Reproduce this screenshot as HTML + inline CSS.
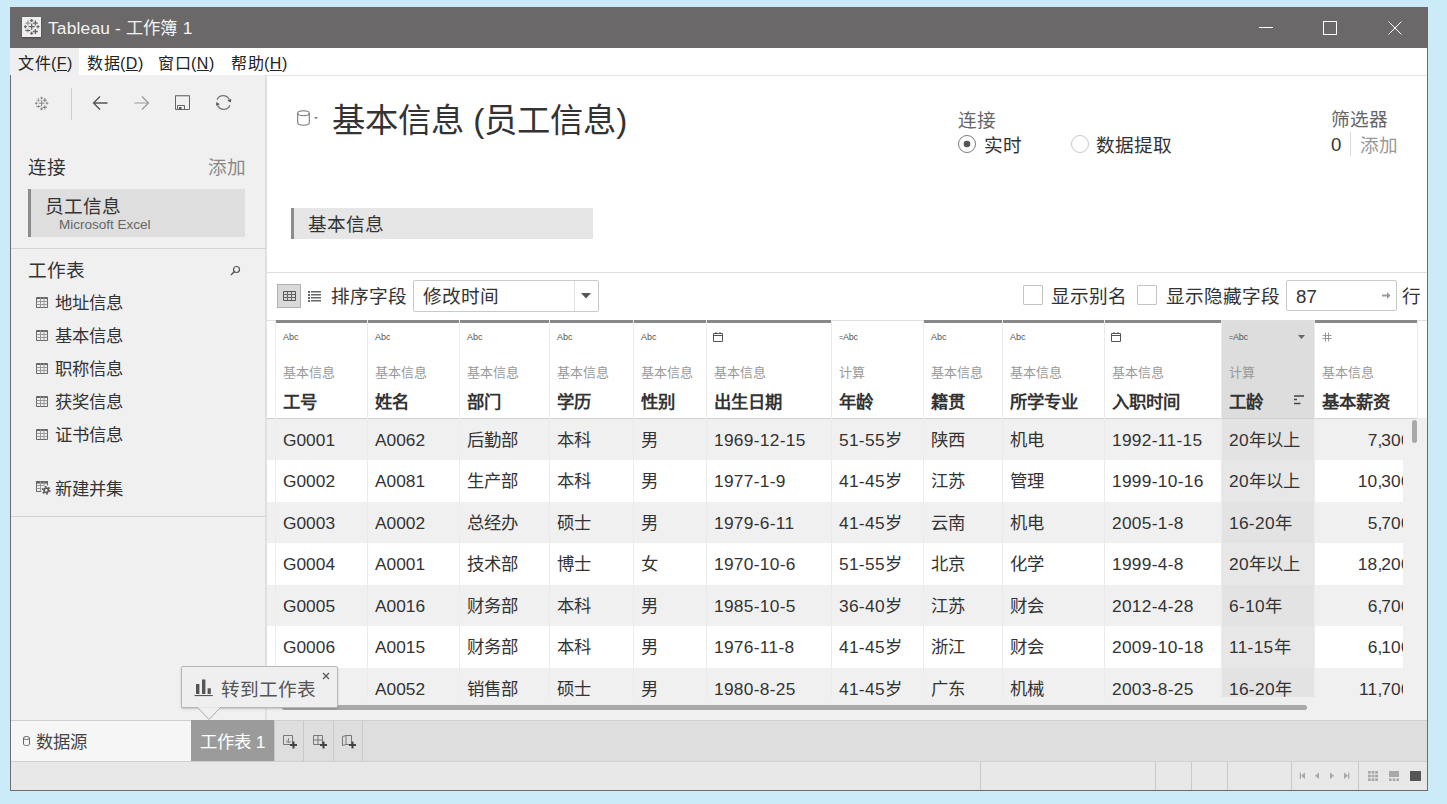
<!DOCTYPE html>
<html lang="zh-CN">
<head>
<meta charset="utf-8">
<style>
*{margin:0;padding:0;box-sizing:border-box}
html,body{width:1447px;height:804px;overflow:hidden;background:#cbebf8;font-family:"Liberation Sans",sans-serif;color:#333}
div,span{position:absolute}
.t{white-space:nowrap;line-height:1}
u{text-decoration:underline;text-underline-offset:1px}
</style>
</head>
<body>

<div style="left:10px;top:7px;width:1418px;height:784px;background:#fff;border:1px solid #6c6c6c;border-top:none"></div>
<div style="left:10px;top:7px;width:1418px;height:41px;background:#6a6868"></div>
<div style="left:22px;top:17px;width:19px;height:19.5px;background:#eeeeee;box-shadow:0 1px 2px rgba(0,0,0,.35)">
<svg width="19" height="20" viewBox="0 0 19 20" style="position:absolute;left:0;top:0">
<g stroke="#666" stroke-width="1.3" fill="none">
<path d="M9.7 6.6v6.2M6.6 9.7h6.2"/>
<path d="M9.6 2v3M8.1 3.5h3"/>
<path d="M9.6 14.8v3M8.1 16.3h3"/>
<path d="M3.4 8.2v3M1.9 9.7h3"/>
<path d="M16 8.2v3M14.5 9.7h3"/>
<path d="M13.4 3.6v5M10.9 6.1h5"/>
<path d="M13.4 12v5M10.9 14.5h5"/>
<path d="M5.9 3.6v5M3.4 6.1h5" stroke="#999"/>
<path d="M5.9 11.5v4" stroke="#aaa"/><path d="M3.4 13.5h5"/>
</g></svg></div>
<div class="t" style="left:48px;top:19.5px;font-size:17.33px;color:#f4f4f4;letter-spacing:0.2px">Tableau - 工作簿 1</div>
<div style="left:1259px;top:27px;width:14px;height:1px;background:#fff"></div>
<div style="left:1323px;top:21px;width:14px;height:14px;border:1px solid #fff"></div>
<svg style="position:absolute;left:1388px;top:21px" width="14" height="14"><path d="M0.5 0.5L13.5 13.5M13.5 0.5L0.5 13.5" stroke="#fff" stroke-width="1"/></svg>
<div style="left:10px;top:48px;width:69px;height:27px;background:#efefef"></div>
<div style="left:267px;top:75px;width:1160px;height:1px;background:#e6e6e6"></div>
<div class="t" style="left:18px;top:55.5px;font-size:16px;color:#222;letter-spacing:0.5px">文件(<u>F</u>)</div>
<div class="t" style="left:87px;top:55.5px;font-size:16px;color:#222;letter-spacing:0.5px">数据(<u>D</u>)</div>
<div class="t" style="left:158px;top:55.5px;font-size:16px;color:#222;letter-spacing:0.5px">窗口(<u>N</u>)</div>
<div class="t" style="left:231px;top:55.5px;font-size:16px;color:#222;letter-spacing:0.5px">帮助(<u>H</u>)</div>
<div style="left:11px;top:75px;width:256px;height:645px;background:#f0f0f0;border-right:2px solid #e0e0e0"></div>
<svg style="position:absolute;left:33px;top:95px" width="17" height="17" viewBox="0 0 19 20">
<g stroke="#888" stroke-width="1.3" fill="none">
<path d="M9.7 6.6v6.2M6.6 9.7h6.2"/>
<path d="M9.6 2v3M8.1 3.5h3"/>
<path d="M9.6 14.8v3M8.1 16.3h3"/>
<path d="M3.4 8.2v3M1.9 9.7h3"/>
<path d="M16 8.2v3M14.5 9.7h3"/>
<path d="M13.4 3.6v5M10.9 6.1h5"/>
<path d="M13.4 12v5M10.9 14.5h5"/>
<path d="M5.9 3.6v5M3.4 6.1h5" stroke="#aaa"/>
<path d="M5.9 11.5v4" stroke="#bbb"/><path d="M3.4 13.5h5"/>
</g></svg>
<div style="left:71px;top:88px;width:1px;height:32px;background:#cfcfcf"></div>
<svg style="position:absolute;left:92px;top:95px" width="17" height="16"><path d="M1.5 8H15.5M8 1.5L1.5 8L8 14.5" stroke="#555" stroke-width="1.4" fill="none"/></svg>
<svg style="position:absolute;left:133px;top:95px" width="17" height="16"><path d="M1.5 8H15.5M9 1.5L15.5 8L9 14.5" stroke="#999" stroke-width="1.2" fill="none"/></svg>
<svg style="position:absolute;left:175px;top:95px" width="15" height="15"><path d="M0.5 0.5H14.5V14.5H0.5Z" stroke="#666" stroke-width="1" fill="none"/><path d="M0.5 1H14.5" stroke="#999" stroke-width="1"/><path d="M2.5 10.5H9.5V14.5H2.5Z" stroke="#666" stroke-width="1" fill="none"/><rect x="4" y="12" width="2.5" height="2.5" fill="#555"/></svg>
<svg style="position:absolute;left:215px;top:95px" width="17" height="16" viewBox="0 0 17 16"><path d="M2 4.6A6.8 6.8 0 0 1 14.3 4.6M15 10.2A6.8 6.8 0 0 1 2.6 10.4" stroke="#777" stroke-width="1.3" fill="none"/><path d="M12.3 5.4L16.4 3.9L15.7 7.6Z M1 10.7L1.4 7L4.9 9.3Z" fill="#555"/></svg>
<div class="t" style="left:28px;top:158.5px;font-size:18.67px;color:#333">连接</div>
<div class="t" style="left:208px;top:158.5px;font-size:18.67px;color:#8a8a8a">添加</div>
<div style="left:28px;top:189px;width:217px;height:48px;background:#dedede;border-left:3px solid #8c8c8c"></div>
<div class="t" style="left:45px;top:197.5px;font-size:18.67px;color:#333">员工信息</div>
<div class="t" style="left:59px;top:218px;font-size:13.5px;color:#666">Microsoft Excel</div>
<div style="left:11px;top:248px;width:255px;height:1px;background:#d4d4d4"></div>
<div class="t" style="left:28px;top:262px;font-size:18.67px;color:#333">工作表</div>
<svg style="position:absolute;left:230px;top:265px" width="11" height="11"><circle cx="6.5" cy="4.5" r="3" stroke="#555" stroke-width="1.2" fill="none"/><path d="M4.4 6.6L1 10" stroke="#555" stroke-width="1.4"/></svg>
<svg style="position:absolute;left:36px;top:297px" width="12" height="11"><path d="M0.5 0.5H11.5V10.5H0.5Z" stroke="#666" fill="none"/><path d="M0.5 1.5H11.5" stroke="#666"/><path d="M0.5 4.5H11.5M0.5 7.5H11.5M4.5 0.5V10.5M8 0.5V10.5" stroke="#999" stroke-width="1" fill="none"/></svg>
<div class="t" style="left:55px;top:294.5px;font-size:17.33px;color:#333">地址信息</div>
<svg style="position:absolute;left:36px;top:330px" width="12" height="11"><path d="M0.5 0.5H11.5V10.5H0.5Z" stroke="#666" fill="none"/><path d="M0.5 1.5H11.5" stroke="#666"/><path d="M0.5 4.5H11.5M0.5 7.5H11.5M4.5 0.5V10.5M8 0.5V10.5" stroke="#999" stroke-width="1" fill="none"/></svg>
<div class="t" style="left:55px;top:327.5px;font-size:17.33px;color:#333">基本信息</div>
<svg style="position:absolute;left:36px;top:363px" width="12" height="11"><path d="M0.5 0.5H11.5V10.5H0.5Z" stroke="#666" fill="none"/><path d="M0.5 1.5H11.5" stroke="#666"/><path d="M0.5 4.5H11.5M0.5 7.5H11.5M4.5 0.5V10.5M8 0.5V10.5" stroke="#999" stroke-width="1" fill="none"/></svg>
<div class="t" style="left:55px;top:360.5px;font-size:17.33px;color:#333">职称信息</div>
<svg style="position:absolute;left:36px;top:396px" width="12" height="11"><path d="M0.5 0.5H11.5V10.5H0.5Z" stroke="#666" fill="none"/><path d="M0.5 1.5H11.5" stroke="#666"/><path d="M0.5 4.5H11.5M0.5 7.5H11.5M4.5 0.5V10.5M8 0.5V10.5" stroke="#999" stroke-width="1" fill="none"/></svg>
<div class="t" style="left:55px;top:393.5px;font-size:17.33px;color:#333">获奖信息</div>
<svg style="position:absolute;left:36px;top:429px" width="12" height="11"><path d="M0.5 0.5H11.5V10.5H0.5Z" stroke="#666" fill="none"/><path d="M0.5 1.5H11.5" stroke="#666"/><path d="M0.5 4.5H11.5M0.5 7.5H11.5M4.5 0.5V10.5M8 0.5V10.5" stroke="#999" stroke-width="1" fill="none"/></svg>
<div class="t" style="left:55px;top:426.5px;font-size:17.33px;color:#333">证书信息</div>
<svg style="position:absolute;left:36px;top:481px" width="16" height="15"><path d="M0.5 0.5H11.5V10.5H0.5Z" stroke="#666" fill="none"/><rect x="0" y="0" width="12" height="2.6" fill="#666"/><path d="M0.5 4.5H11.5M0.5 7.5H11.5M4.5 0.5V10.5M8 0.5V10.5" stroke="#999" fill="none"/><circle cx="10.2" cy="9.3" r="5" fill="#f0f0f0"/><circle cx="10.2" cy="9.3" r="2.2" stroke="#5a5a5a" stroke-width="1.7" fill="none"/><circle cx="10.2" cy="9.3" r="3.6" stroke="#5a5a5a" stroke-width="1.6" fill="none" stroke-dasharray="1.7 2.07"/></svg>
<div class="t" style="left:55px;top:480.5px;font-size:17.33px;color:#333">新建并集</div>
<div style="left:11px;top:516px;width:255px;height:1px;background:#d4d4d4"></div>
<svg style="position:absolute;left:297px;top:110px" width="22" height="16"><path d="M0.7 3.2V12.8C0.7 14.3 3 15.3 6.5 15.3S12.3 14.3 12.3 12.8V3.2" stroke="#777" stroke-width="1.1" fill="none"/><ellipse cx="6.5" cy="3.2" rx="5.8" ry="2.5" stroke="#777" stroke-width="1.1" fill="none"/><path d="M17 7H21L19 9.5Z" fill="#888"/></svg>
<div class="t" style="left:332px;top:103.5px;font-size:33.33px;color:#333">基本信息 (员工信息)</div>
<div class="t" style="left:958px;top:112px;font-size:18.67px;color:#666">连接</div>
<svg style="position:absolute;left:957px;top:134px" width="20" height="20"><circle cx="10" cy="10" r="8.5" stroke="#7a7a7a" fill="#fff"/><circle cx="10" cy="10" r="3.3" fill="#555"/></svg>
<div class="t" style="left:984px;top:137px;font-size:18.67px;color:#333">实时</div>
<svg style="position:absolute;left:1070px;top:134px" width="20" height="20"><circle cx="10" cy="10" r="8.5" stroke="#c8c8c8" fill="#fff"/></svg>
<div class="t" style="left:1096px;top:137px;font-size:18.67px;color:#333">数据提取</div>
<div class="t" style="left:1331px;top:111px;font-size:18.67px;color:#666">筛选器</div>
<div class="t" style="left:1331px;top:136px;font-size:18.67px;color:#333">0</div>
<div style="left:1350px;top:132px;width:1px;height:24px;background:#d8d8d8"></div>
<div class="t" style="left:1360px;top:137px;font-size:18.67px;color:#999">添加</div>
<div style="left:291px;top:208px;width:302px;height:31px;background:#e6e6e6;border-left:3px solid #8c8c8c"></div>
<div class="t" style="left:308px;top:216px;font-size:18.67px;color:#333">基本信息</div>
<div style="left:267px;top:272px;width:1160px;height:1px;background:#dedede"></div>
<div style="left:277px;top:284px;width:24px;height:24px;background:#d9d9d9;border:1px solid #b0b0b0"></div>
<svg style="position:absolute;left:283px;top:291px" width="13" height="10"><path d="M0.5 0.5H12.5V9.5H0.5Z" stroke="#555" fill="none"/><path d="M0.5 3.5H12.5M0.5 6.5H12.5M4.5 0.5V9.5M8.5 0.5V9.5" stroke="#666" fill="none"/></svg>
<svg style="position:absolute;left:308px;top:291px" width="13" height="11"><g fill="#666"><rect x="0" y="0" width="2" height="2"/><rect x="0" y="3" width="2" height="2"/><rect x="0" y="6" width="2" height="2"/><rect x="0" y="9" width="2" height="2"/><rect x="3" y="0" width="10" height="1.5"/><rect x="3" y="3" width="10" height="1.5"/><rect x="3" y="6" width="10" height="1.5"/><rect x="3" y="9" width="10" height="1.5"/></g></svg>
<div class="t" style="left:331px;top:288px;font-size:18.67px;color:#333">排序字段</div>
<div style="left:413px;top:280px;width:186px;height:32px;background:#fff;border:1px solid #c9c9c9;border-radius:2px"></div>
<div style="left:574px;top:281px;width:1px;height:30px;background:#e0e0e0"></div>
<svg style="position:absolute;left:581px;top:293px" width="11" height="6"><path d="M0 0H10L5 5.5Z" fill="#555"/></svg>
<div class="t" style="left:423px;top:288px;font-size:18.67px;color:#333">修改时间</div>
<div style="left:1023px;top:285px;width:20px;height:20px;background:#fff;border:1px solid #c4c4c4;border-radius:1px"></div>
<div class="t" style="left:1051px;top:288px;font-size:18.67px;color:#333">显示别名</div>
<div style="left:1137px;top:285px;width:20px;height:20px;background:#fff;border:1px solid #c4c4c4;border-radius:1px"></div>
<div class="t" style="left:1166px;top:288px;font-size:18.67px;color:#333">显示隐藏字段</div>
<div style="left:1286px;top:280px;width:111px;height:31px;background:#fff;border:1px solid #c9c9c9;border-radius:2px"></div>
<div class="t" style="left:1296px;top:288px;font-size:18.67px;color:#333">87</div>
<svg style="position:absolute;left:1382px;top:291px" width="9" height="9"><path d="M0 3.5H5V1L8.5 4.5L5 8V5.5H0Z" fill="#999"/></svg>
<div class="t" style="left:1402px;top:288px;font-size:18.67px;color:#333">行</div>
<div style="left:267px;top:320px;width:1160px;height:400px;background:#fff;overflow:hidden">
<div style="left:0;top:98.5px;width:1136px;height:41.5px;background:#f0f0f0"></div>
<div style="left:0;top:140.0px;width:1136px;height:41.5px;background:#fff"></div>
<div style="left:0;top:181.5px;width:1136px;height:41.5px;background:#f0f0f0"></div>
<div style="left:0;top:223.0px;width:1136px;height:41.5px;background:#fff"></div>
<div style="left:0;top:264.5px;width:1136px;height:41.5px;background:#f0f0f0"></div>
<div style="left:0;top:306.0px;width:1136px;height:41.5px;background:#fff"></div>
<div style="left:0;top:347.5px;width:1136px;height:41.5px;background:#f0f0f0"></div>
<div style="left:1136px;top:98px;width:24px;height:300px;background:#f0f0f0"></div>
<div style="left:955px;top:0;width:92px;height:98px;background:#dddddd"></div>
<div style="left:955px;top:98.5px;width:92px;height:41.5px;background:#e3e3e3"></div>
<div style="left:955px;top:140.0px;width:92px;height:41.5px;background:#e7e7e7"></div>
<div style="left:955px;top:181.5px;width:92px;height:41.5px;background:#e3e3e3"></div>
<div style="left:955px;top:223.0px;width:92px;height:41.5px;background:#e7e7e7"></div>
<div style="left:955px;top:264.5px;width:92px;height:41.5px;background:#e3e3e3"></div>
<div style="left:955px;top:306.0px;width:92px;height:41.5px;background:#e7e7e7"></div>
<div style="left:955px;top:347.5px;width:92px;height:41.5px;background:#e3e3e3"></div>
<div style="left:0;top:98px;width:1150px;height:1px;background:#d0d0d0"></div>
<div style="left:0;top:0;width:1160px;height:1px;background:#e0e0e0"></div>
<div style="left:8px;top:1px;width:1px;height:377px;background:#ebebeb"></div>
<div style="left:100px;top:1px;width:1px;height:377px;background:#ebebeb"></div>
<div style="left:192px;top:1px;width:1px;height:377px;background:#ebebeb"></div>
<div style="left:282px;top:1px;width:1px;height:377px;background:#ebebeb"></div>
<div style="left:366px;top:1px;width:1px;height:377px;background:#ebebeb"></div>
<div style="left:439px;top:1px;width:1px;height:377px;background:#ebebeb"></div>
<div style="left:564px;top:1px;width:1px;height:377px;background:#ebebeb"></div>
<div style="left:656px;top:1px;width:1px;height:377px;background:#ebebeb"></div>
<div style="left:735px;top:1px;width:1px;height:377px;background:#ebebeb"></div>
<div style="left:837px;top:1px;width:1px;height:377px;background:#ebebeb"></div>
<div style="left:954px;top:1px;width:1px;height:377px;background:#ebebeb"></div>
<div style="left:1047px;top:1px;width:1px;height:377px;background:#ebebeb"></div>
<div style="left:1150px;top:1px;width:1px;height:98px;background:#ebebeb"></div>
<div style="left:9px;top:0;width:91px;height:3px;background:#888"></div>
<div class="t" style="left:16px;top:13px;font-size:9px;color:#555">Abc</div>
<div class="t" style="left:16px;top:46px;font-size:13px;color:#999">基本信息</div>
<div class="t" style="left:16px;top:74px;font-size:17.33px;font-weight:bold;color:#333">工号</div>
<div style="left:101px;top:0;width:91px;height:3px;background:#888"></div>
<div class="t" style="left:108px;top:13px;font-size:9px;color:#555">Abc</div>
<div class="t" style="left:108px;top:46px;font-size:13px;color:#999">基本信息</div>
<div class="t" style="left:108px;top:74px;font-size:17.33px;font-weight:bold;color:#333">姓名</div>
<div style="left:193px;top:0;width:89px;height:3px;background:#888"></div>
<div class="t" style="left:200px;top:13px;font-size:9px;color:#555">Abc</div>
<div class="t" style="left:200px;top:46px;font-size:13px;color:#999">基本信息</div>
<div class="t" style="left:200px;top:74px;font-size:17.33px;font-weight:bold;color:#333">部门</div>
<div style="left:283px;top:0;width:83px;height:3px;background:#888"></div>
<div class="t" style="left:290px;top:13px;font-size:9px;color:#555">Abc</div>
<div class="t" style="left:290px;top:46px;font-size:13px;color:#999">基本信息</div>
<div class="t" style="left:290px;top:74px;font-size:17.33px;font-weight:bold;color:#333">学历</div>
<div style="left:367px;top:0;width:72px;height:3px;background:#888"></div>
<div class="t" style="left:374px;top:13px;font-size:9px;color:#555">Abc</div>
<div class="t" style="left:374px;top:46px;font-size:13px;color:#999">基本信息</div>
<div class="t" style="left:374px;top:74px;font-size:17.33px;font-weight:bold;color:#333">性别</div>
<div style="left:440px;top:0;width:124px;height:3px;background:#888"></div>
<svg style="position:absolute;left:446px;top:12px" width="10" height="10"><path d="M0.5 1.5H9.5V9.5H0.5Z M0.5 3.5H9.5 M3 0V2 M7 0V2" stroke="#555" fill="none"/></svg>
<div class="t" style="left:447px;top:46px;font-size:13px;color:#999">基本信息</div>
<div class="t" style="left:447px;top:74px;font-size:17.33px;font-weight:bold;color:#333">出生日期</div>
<div class="t" style="left:572px;top:13px;font-size:9px;color:#555;letter-spacing:-0.2px"><span style="position:static;font-size:7px">=</span>Abc</div>
<div class="t" style="left:572px;top:46px;font-size:13px;color:#999">计算</div>
<div class="t" style="left:572px;top:74px;font-size:17.33px;font-weight:bold;color:#333">年龄</div>
<div style="left:657px;top:0;width:78px;height:3px;background:#888"></div>
<div class="t" style="left:664px;top:13px;font-size:9px;color:#555">Abc</div>
<div class="t" style="left:664px;top:46px;font-size:13px;color:#999">基本信息</div>
<div class="t" style="left:664px;top:74px;font-size:17.33px;font-weight:bold;color:#333">籍贯</div>
<div style="left:736px;top:0;width:101px;height:3px;background:#888"></div>
<div class="t" style="left:743px;top:13px;font-size:9px;color:#555">Abc</div>
<div class="t" style="left:743px;top:46px;font-size:13px;color:#999">基本信息</div>
<div class="t" style="left:743px;top:74px;font-size:17.33px;font-weight:bold;color:#333">所学专业</div>
<div style="left:838px;top:0;width:116px;height:3px;background:#888"></div>
<svg style="position:absolute;left:844px;top:12px" width="10" height="10"><path d="M0.5 1.5H9.5V9.5H0.5Z M0.5 3.5H9.5 M3 0V2 M7 0V2" stroke="#555" fill="none"/></svg>
<div class="t" style="left:845px;top:46px;font-size:13px;color:#999">基本信息</div>
<div class="t" style="left:845px;top:74px;font-size:17.33px;font-weight:bold;color:#333">入职时间</div>
<div class="t" style="left:962px;top:13px;font-size:9px;color:#555;letter-spacing:-0.2px"><span style="position:static;font-size:7px">=</span>Abc</div>
<div class="t" style="left:962px;top:46px;font-size:13px;color:#999">计算</div>
<div class="t" style="left:962px;top:74px;font-size:17.33px;font-weight:bold;color:#333">工龄</div>
<div style="left:1048px;top:0;width:102px;height:3px;background:#888"></div>
<svg style="position:absolute;left:1055px;top:12px" width="10" height="10"><path d="M3.5 0.5V9.5M6.5 0.5V9.5M0.5 3.5H9.5M0.5 6.5H9.5" stroke="#999" stroke-width="1" fill="none"/></svg>
<div class="t" style="left:1055px;top:46px;font-size:13px;color:#999">基本信息</div>
<div class="t" style="left:1055px;top:74px;font-size:17.33px;font-weight:bold;color:#333">基本薪资</div>
<svg style="position:absolute;left:1031px;top:15px" width="8" height="5"><path d="M0 0H7L3.5 4Z" fill="#666"/></svg>
<svg style="position:absolute;left:1027px;top:75px" width="11" height="10"><path d="M0 1H10M0 4.5H3M0 8.5H6.5" stroke="#444" stroke-width="1.4"/></svg>
<div style="left:0;top:98.5px;width:1136px;height:278.5px;overflow:hidden">
<div class="t" style="left:16px;top:13.25px;font-size:17.33px;color:#333;">G0001</div>
<div class="t" style="left:108px;top:13.25px;font-size:17.33px;color:#333;">A0062</div>
<div class="t" style="left:200px;top:13.25px;font-size:17.33px;color:#333;">后勤部</div>
<div class="t" style="left:290px;top:13.25px;font-size:17.33px;color:#333;">本科</div>
<div class="t" style="left:374px;top:13.25px;font-size:17.33px;color:#333;">男</div>
<div class="t" style="left:447px;top:13.25px;font-size:17.33px;color:#333;letter-spacing:0.3px;">1969-12-15</div>
<div class="t" style="left:572px;top:13.25px;font-size:17.33px;color:#333;letter-spacing:0.3px;">51-55岁</div>
<div class="t" style="left:664px;top:13.25px;font-size:17.33px;color:#333;">陕西</div>
<div class="t" style="left:743px;top:13.25px;font-size:17.33px;color:#333;">机电</div>
<div class="t" style="left:845px;top:13.25px;font-size:17.33px;color:#333;letter-spacing:0.3px;">1992-11-15</div>
<div class="t" style="left:962px;top:13.25px;font-size:17.33px;color:#333;letter-spacing:0.3px;">20年以上</div>
<div class="t" style="right:-8px;top:13.25px;font-size:17.33px;color:#333;letter-spacing:0.3px">7<span style="position:static;margin-right:-1.5px">,</span>300</div>
<div class="t" style="left:16px;top:54.75px;font-size:17.33px;color:#333;">G0002</div>
<div class="t" style="left:108px;top:54.75px;font-size:17.33px;color:#333;">A0081</div>
<div class="t" style="left:200px;top:54.75px;font-size:17.33px;color:#333;">生产部</div>
<div class="t" style="left:290px;top:54.75px;font-size:17.33px;color:#333;">本科</div>
<div class="t" style="left:374px;top:54.75px;font-size:17.33px;color:#333;">男</div>
<div class="t" style="left:447px;top:54.75px;font-size:17.33px;color:#333;letter-spacing:0.3px;">1977-1-9</div>
<div class="t" style="left:572px;top:54.75px;font-size:17.33px;color:#333;letter-spacing:0.3px;">41-45岁</div>
<div class="t" style="left:664px;top:54.75px;font-size:17.33px;color:#333;">江苏</div>
<div class="t" style="left:743px;top:54.75px;font-size:17.33px;color:#333;">管理</div>
<div class="t" style="left:845px;top:54.75px;font-size:17.33px;color:#333;letter-spacing:0.3px;">1999-10-16</div>
<div class="t" style="left:962px;top:54.75px;font-size:17.33px;color:#333;letter-spacing:0.3px;">20年以上</div>
<div class="t" style="right:-8px;top:54.75px;font-size:17.33px;color:#333;letter-spacing:0.3px">10<span style="position:static;margin-right:-1.5px">,</span>300</div>
<div class="t" style="left:16px;top:96.25px;font-size:17.33px;color:#333;">G0003</div>
<div class="t" style="left:108px;top:96.25px;font-size:17.33px;color:#333;">A0002</div>
<div class="t" style="left:200px;top:96.25px;font-size:17.33px;color:#333;">总经办</div>
<div class="t" style="left:290px;top:96.25px;font-size:17.33px;color:#333;">硕士</div>
<div class="t" style="left:374px;top:96.25px;font-size:17.33px;color:#333;">男</div>
<div class="t" style="left:447px;top:96.25px;font-size:17.33px;color:#333;letter-spacing:0.3px;">1979-6-11</div>
<div class="t" style="left:572px;top:96.25px;font-size:17.33px;color:#333;letter-spacing:0.3px;">41-45岁</div>
<div class="t" style="left:664px;top:96.25px;font-size:17.33px;color:#333;">云南</div>
<div class="t" style="left:743px;top:96.25px;font-size:17.33px;color:#333;">机电</div>
<div class="t" style="left:845px;top:96.25px;font-size:17.33px;color:#333;letter-spacing:0.3px;">2005-1-8</div>
<div class="t" style="left:962px;top:96.25px;font-size:17.33px;color:#333;letter-spacing:0.3px;">16-20年</div>
<div class="t" style="right:-8px;top:96.25px;font-size:17.33px;color:#333;letter-spacing:0.3px">5<span style="position:static;margin-right:-1.5px">,</span>700</div>
<div class="t" style="left:16px;top:137.75px;font-size:17.33px;color:#333;">G0004</div>
<div class="t" style="left:108px;top:137.75px;font-size:17.33px;color:#333;">A0001</div>
<div class="t" style="left:200px;top:137.75px;font-size:17.33px;color:#333;">技术部</div>
<div class="t" style="left:290px;top:137.75px;font-size:17.33px;color:#333;">博士</div>
<div class="t" style="left:374px;top:137.75px;font-size:17.33px;color:#333;">女</div>
<div class="t" style="left:447px;top:137.75px;font-size:17.33px;color:#333;letter-spacing:0.3px;">1970-10-6</div>
<div class="t" style="left:572px;top:137.75px;font-size:17.33px;color:#333;letter-spacing:0.3px;">51-55岁</div>
<div class="t" style="left:664px;top:137.75px;font-size:17.33px;color:#333;">北京</div>
<div class="t" style="left:743px;top:137.75px;font-size:17.33px;color:#333;">化学</div>
<div class="t" style="left:845px;top:137.75px;font-size:17.33px;color:#333;letter-spacing:0.3px;">1999-4-8</div>
<div class="t" style="left:962px;top:137.75px;font-size:17.33px;color:#333;letter-spacing:0.3px;">20年以上</div>
<div class="t" style="right:-8px;top:137.75px;font-size:17.33px;color:#333;letter-spacing:0.3px">18<span style="position:static;margin-right:-1.5px">,</span>200</div>
<div class="t" style="left:16px;top:179.25px;font-size:17.33px;color:#333;">G0005</div>
<div class="t" style="left:108px;top:179.25px;font-size:17.33px;color:#333;">A0016</div>
<div class="t" style="left:200px;top:179.25px;font-size:17.33px;color:#333;">财务部</div>
<div class="t" style="left:290px;top:179.25px;font-size:17.33px;color:#333;">本科</div>
<div class="t" style="left:374px;top:179.25px;font-size:17.33px;color:#333;">男</div>
<div class="t" style="left:447px;top:179.25px;font-size:17.33px;color:#333;letter-spacing:0.3px;">1985-10-5</div>
<div class="t" style="left:572px;top:179.25px;font-size:17.33px;color:#333;letter-spacing:0.3px;">36-40岁</div>
<div class="t" style="left:664px;top:179.25px;font-size:17.33px;color:#333;">江苏</div>
<div class="t" style="left:743px;top:179.25px;font-size:17.33px;color:#333;">财会</div>
<div class="t" style="left:845px;top:179.25px;font-size:17.33px;color:#333;letter-spacing:0.3px;">2012-4-28</div>
<div class="t" style="left:962px;top:179.25px;font-size:17.33px;color:#333;letter-spacing:0.3px;">6-10年</div>
<div class="t" style="right:-8px;top:179.25px;font-size:17.33px;color:#333;letter-spacing:0.3px">6<span style="position:static;margin-right:-1.5px">,</span>700</div>
<div class="t" style="left:16px;top:220.75px;font-size:17.33px;color:#333;">G0006</div>
<div class="t" style="left:108px;top:220.75px;font-size:17.33px;color:#333;">A0015</div>
<div class="t" style="left:200px;top:220.75px;font-size:17.33px;color:#333;">财务部</div>
<div class="t" style="left:290px;top:220.75px;font-size:17.33px;color:#333;">本科</div>
<div class="t" style="left:374px;top:220.75px;font-size:17.33px;color:#333;">男</div>
<div class="t" style="left:447px;top:220.75px;font-size:17.33px;color:#333;letter-spacing:0.3px;">1976-11-8</div>
<div class="t" style="left:572px;top:220.75px;font-size:17.33px;color:#333;letter-spacing:0.3px;">41-45岁</div>
<div class="t" style="left:664px;top:220.75px;font-size:17.33px;color:#333;">浙江</div>
<div class="t" style="left:743px;top:220.75px;font-size:17.33px;color:#333;">财会</div>
<div class="t" style="left:845px;top:220.75px;font-size:17.33px;color:#333;letter-spacing:0.3px;">2009-10-18</div>
<div class="t" style="left:962px;top:220.75px;font-size:17.33px;color:#333;letter-spacing:0.3px;">11-15年</div>
<div class="t" style="right:-8px;top:220.75px;font-size:17.33px;color:#333;letter-spacing:0.3px">6<span style="position:static;margin-right:-1.5px">,</span>100</div>
<div class="t" style="left:16px;top:262.25px;font-size:17.33px;color:#333;">G0007</div>
<div class="t" style="left:108px;top:262.25px;font-size:17.33px;color:#333;">A0052</div>
<div class="t" style="left:200px;top:262.25px;font-size:17.33px;color:#333;">销售部</div>
<div class="t" style="left:290px;top:262.25px;font-size:17.33px;color:#333;">硕士</div>
<div class="t" style="left:374px;top:262.25px;font-size:17.33px;color:#333;">男</div>
<div class="t" style="left:447px;top:262.25px;font-size:17.33px;color:#333;letter-spacing:0.3px;">1980-8-25</div>
<div class="t" style="left:572px;top:262.25px;font-size:17.33px;color:#333;letter-spacing:0.3px;">41-45岁</div>
<div class="t" style="left:664px;top:262.25px;font-size:17.33px;color:#333;">广东</div>
<div class="t" style="left:743px;top:262.25px;font-size:17.33px;color:#333;">机械</div>
<div class="t" style="left:845px;top:262.25px;font-size:17.33px;color:#333;letter-spacing:0.3px;">2003-8-25</div>
<div class="t" style="left:962px;top:262.25px;font-size:17.33px;color:#333;letter-spacing:0.3px;">16-20年</div>
<div class="t" style="right:-8px;top:262.25px;font-size:17.33px;color:#333;letter-spacing:0.3px">11<span style="position:static;margin-right:-1.5px">,</span>700</div>
</div>
<div style="left:1145px;top:100px;width:5px;height:23px;background:#a9a9a9;border-radius:3px"></div>
<div style="left:0;top:377px;width:1160px;height:23px;background:#f0f0f0"></div>
<div style="left:15px;top:385px;width:1025px;height:5px;background:#a9a9a9;border-radius:3px"></div>
</div>
<div style="left:11px;top:720px;width:1416px;height:41px;background:#dedede;border-top:1px solid #cfcfcf"></div>
<div style="left:11px;top:720px;width:180px;height:41px;background:#f6f6f6;border-top:1px solid #cfcfcf"></div>
<svg style="position:absolute;left:23px;top:736px" width="7" height="10"><path d="M0.5 2V8C0.5 8.9 1.8 9.5 3.5 9.5S6.5 8.9 6.5 8V2" stroke="#666" fill="none"/><ellipse cx="3.5" cy="2" rx="3" ry="1.5" stroke="#666" fill="none"/></svg>
<div class="t" style="left:36px;top:734px;font-size:17.33px;color:#444">数据源</div>
<div style="left:191px;top:720px;width:83px;height:41px;background:#9b9b9b"></div>
<div class="t" style="left:200px;top:734px;font-size:17.33px;color:#fff">工作表 1</div>
<div style="left:274px;top:721px;width:1px;height:40px;background:#c8c8c8"></div>
<div style="left:303px;top:721px;width:1px;height:40px;background:#c8c8c8"></div>
<div style="left:333px;top:721px;width:1px;height:40px;background:#c8c8c8"></div>
<div style="left:362px;top:721px;width:1px;height:40px;background:#c8c8c8"></div>
<svg style="position:absolute;left:283px;top:735px" width="15" height="15"><path d="M0.5 0.5H9.5V9.5H0.5Z" stroke="#777" fill="none"/><path d="M4 8V5M5.5 8V3M7 8V6" stroke="#888"/><path d="M10.5 6.5V13.5M7 10H14" stroke="#444" stroke-width="2"/></svg>
<svg style="position:absolute;left:313px;top:735px" width="15" height="15"><path d="M0.5 0.5H9.5V9.5H0.5Z M0.5 5H9.5 M5 0.5V9.5" stroke="#777" fill="none"/><path d="M10.5 6.5V13.5M7 10H14" stroke="#444" stroke-width="2"/></svg>
<svg style="position:absolute;left:342px;top:735px" width="15" height="15"><path d="M0.5 1.5L4 0.5H9.5V9.5H4L0.5 10.5Z M4 0.5V9.5" stroke="#777" fill="none"/><path d="M10.5 6.5V13.5M7 10H14" stroke="#444" stroke-width="2"/></svg>
<div style="left:11px;top:761px;width:1416px;height:29px;background:#e8e8e8;border-top:1px solid #d0d0d0"></div>
<div style="left:980px;top:762px;width:1px;height:28px;background:#c8c8c8"></div>
<div style="left:1155px;top:762px;width:1px;height:28px;background:#c8c8c8"></div>
<div style="left:1191px;top:762px;width:1px;height:28px;background:#c8c8c8"></div>
<div style="left:1227px;top:762px;width:1px;height:28px;background:#c8c8c8"></div>
<div style="left:1291px;top:762px;width:1px;height:28px;background:#c8c8c8"></div>
<div style="left:1358px;top:762px;width:1px;height:28px;background:#c8c8c8"></div>
<svg style="position:absolute;left:1299px;top:772px" width="52" height="8"><g fill="#a8a8a8"><rect x="0.7" y="0.5" width="1.2" height="6.5"/><path d="M6 0.5V7L2 3.75Z"/><path d="M20 0.5V7L16 3.75Z"/><path d="M31 0.5V7L35 3.75Z"/><path d="M45 0.5V7L49 3.75Z"/><rect x="49.2" y="0.5" width="1.2" height="6.5"/></g></svg>
<svg style="position:absolute;left:1368px;top:771px" width="10" height="10"><g fill="#a8a8a8"><rect x="0" y="0" width="2.8" height="2.6"/><rect x="3.6" y="0" width="2.8" height="2.6"/><rect x="7.2" y="0" width="2.8" height="2.6"/><rect x="0" y="3.7" width="2.8" height="2.6"/><rect x="3.6" y="3.7" width="2.8" height="2.6"/><rect x="7.2" y="3.7" width="2.8" height="2.6"/><rect x="0" y="7.4" width="2.8" height="2.6"/><rect x="3.6" y="7.4" width="2.8" height="2.6"/><rect x="7.2" y="7.4" width="2.8" height="2.6"/></g></svg>
<svg style="position:absolute;left:1389px;top:771px" width="10" height="10"><g fill="#a8a8a8"><rect x="0" y="0" width="10" height="6"/><rect x="0" y="7.4" width="2.6" height="2.6"/><rect x="3.7" y="7.4" width="2.6" height="2.6"/><rect x="7.4" y="7.4" width="2.6" height="2.6"/></g></svg>
<div style="left:1410px;top:771px;width:10.5px;height:10px;background:#555"></div>
<div style="left:181px;top:666px;width:157px;height:42px;background:#efefef;border:1px solid #b8b8b8;border-radius:2px;box-shadow:0 1px 2px rgba(0,0,0,.2)"></div>
<svg style="position:absolute;left:197px;top:706px" width="26" height="15"><path d="M0.5 1.5L12 13.5L23.5 1.5" fill="#efefef" stroke="#a8a8a8"/><rect x="1.5" y="0" width="21" height="1.6" fill="#efefef"/></svg>
<svg style="position:absolute;left:194px;top:679px" width="19" height="18"><g fill="#555"><rect x="2" y="5" width="3.4" height="10"/><rect x="8" y="0.5" width="3.4" height="14.5"/><rect x="13.6" y="9.3" width="3.2" height="5.7"/><rect x="0.5" y="16" width="18.3" height="1.1"/></g></svg>
<div class="t" style="left:221px;top:680.5px;font-size:18.67px;color:#555">转到工作表</div>
<svg style="position:absolute;left:322px;top:672px" width="8" height="8"><path d="M1 1L7 7M7 1L1 7" stroke="#555" stroke-width="1.2"/></svg>
</body></html>
